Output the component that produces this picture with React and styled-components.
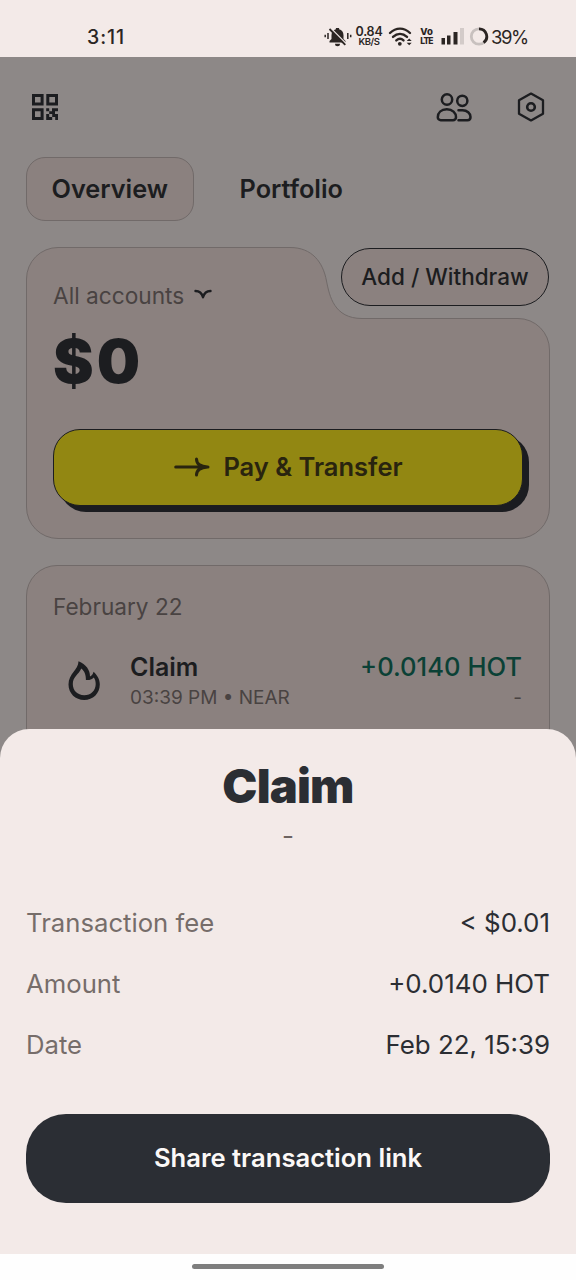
import React from "react";
import styled, { createGlobalStyle } from "styled-components";

const ink = "#1c1d20";

const GlobalStyle = createGlobalStyle`
  * { box-sizing: border-box; }
  body { margin: 0; background: #8d8887; font-family: Inter, "Liberation Sans", sans-serif; }
  button { font-family: inherit; cursor: pointer; }
`;

const Phone = styled.div`
  position: relative;
  width: 576px;
  height: 1280px;
  overflow: hidden;
  display: flex;
  flex-direction: column;
  background: #8d8887;
  color: ${ink};
`;

const StatusBar = styled.header`
  height: 57px;
  flex: none;
  display: flex;
  justify-content: space-between;
  align-items: center;
  padding: 16px 48px 0 87px;
  background: #f3eae8;
  color: #2b2523;
`;

const Clock = styled.span`
  font-size: 19.5px;
  font-weight: 500;
  line-height: 24px;
  letter-spacing: 0.9px;
`;

const StatusIcons = styled.div`
  display: flex;
  align-items: center;
  height: 24px;
`;

const Stack = styled.span`
  display: flex;
  flex-direction: column;
  align-items: center;
  width: ${(p) => p.$width}px;
  margin: ${(p) => p.$margin};
  font-weight: ${(p) => p.$weight};
  white-space: nowrap;
`;

const StackLine = styled.span`
  font-size: ${(p) => p.$size}px;
  line-height: ${(p) => p.$line}px;
  letter-spacing: ${(p) => p.$track || 0}px;
`;

const Percent = styled.span`
  margin-left: 2px;
  font-size: 18.5px;
  line-height: 24px;
  width: 37px;
  letter-spacing: -1.4px;
  white-space: nowrap;
`;

const TopBar = styled.div`
  height: 100px;
  flex: none;
  display: flex;
  justify-content: space-between;
  align-items: center;
  padding: 0 31px 0 31px;
`;

const TopActions = styled.div`
  display: flex;
  align-items: center;
  gap: 45px;
`;

const Tabs = styled.nav`
  flex: none;
  display: flex;
  gap: 20px;
  padding: 0 26px;
`;

const Tab = styled.button`
  height: 64px;
  padding: 0 25px 1px 24.5px;
  border-radius: 19px;
  border: 1px solid ${(p) => (p.$active ? "#716a69" : "transparent")};
  background: ${(p) => (p.$active ? "#8b817f" : "transparent")};
  color: ${ink};
  font-size: 25.3px;
  font-weight: 600;
  line-height: 32px;
`;

const Balance = styled.section`
  position: relative;
  flex: none;
  height: 293px;
  margin: 26px 26px 0;
  padding: 32px 21px 0 27px;
`;

const Outline = styled.svg`
  position: absolute;
  inset: 0;
`;

const BalanceBody = styled.div`
  position: relative;
  display: flex;
  flex-direction: column;
`;

const AccountPicker = styled.div`
  display: flex;
  align-items: center;
  gap: 10px;
  height: 32px;
  font-size: 22.7px;
  color: #494342;
`;

const Amount = styled.div`
  margin-top: 18px;
  height: 64px;
  line-height: 64px;
  font-size: 61px;
  font-weight: 900;
  letter-spacing: 3px;
`;

const AddButton = styled.button`
  position: absolute;
  top: 1px;
  right: 1px;
  width: 208px;
  height: 58px;
  padding: 0 0 2px;
  border: 1.5px solid ${ink};
  border-radius: 29px;
  background: #8b817f;
  color: ${ink};
  font-size: 22.5px;
  font-weight: 500;
`;

const PayButton = styled.button`
  display: flex;
  align-items: center;
  justify-content: center;
  gap: 13px;
  width: 470px;
  height: 77px;
  margin-top: 36px;
  padding: 0 0 2px 1px;
  border: 1.5px solid ${ink};
  border-radius: 27px;
  background: #928712;
  box-shadow: 6px 6px 0 #1b1c20;
  color: #29240f;
  font-size: 25.5px;
  font-weight: 600;
`;

const Activity = styled.section`
  flex: none;
  height: 260px;
  margin: 25px 26px 0;
  padding: 25px 27px 0 26px;
  border: 1px solid #716a69;
  border-radius: 31px;
  background: #8b817f;
`;

const DayLabel = styled.div`
  height: 32px;
  line-height: 32px;
  font-size: 22.6px;
  color: #494342;
`;

const Entry = styled.div`
  display: flex;
  align-items: center;
  margin-top: 26px;
`;

const EntryIcon = styled.div`
  width: 77px;
  height: 64px;
  padding: 10px 0 0 13px;
`;

const EntryColumn = styled.div`
  display: flex;
  flex-direction: column;
  padding-top: 2px;
  align-items: ${(p) => (p.$end ? "flex-end" : "flex-start")};
  flex: ${(p) => (p.$end ? "none" : 1)};
`;

const EntryTitle = styled.span`
  font-size: ${(p) => (p.$gain ? 25.6 : 25)}px;
  line-height: 32px;
  font-weight: ${(p) => (p.$gain ? 500 : 600)};
  color: ${(p) => (p.$gain ? "#0b4136" : ink)};
`;

const EntryNote = styled.span`
  font-size: 19px;
  line-height: 30px;
  color: #494342;
`;

const Sheet = styled.section`
  position: absolute;
  left: 0;
  right: 0;
  bottom: 26px;
  height: 525px;
  display: flex;
  flex-direction: column;
  align-items: stretch;
  padding: 29px 26px 0;
  border-radius: 29px 29px 0 0;
  background: #f3eae8;
  color: #2b2e33;
`;

const SheetTitle = styled.h1`
  margin: 0;
  text-align: center;
  font-size: 47px;
  line-height: 56px;
  font-weight: 900;
  letter-spacing: -0.8px;
`;

const SheetNote = styled.div`
  text-align: center;
  font-size: 26px;
  line-height: 32px;
  margin-top: 6px;
  color: #6d6461;
`;

const Details = styled.dl`
  margin: 40px 0 0;
`;

const Detail = styled.div`
  display: flex;
  justify-content: space-between;
  align-items: center;
  height: 61px;
`;

const Term = styled.dt`
  font-size: 25.7px;
  color: #766d6a;
`;

const Value = styled.dd`
  margin: 0;
  font-size: 25.9px;
  color: #2b2e33;
`;

const ShareButton = styled.button`
  height: 89px;
  margin-top: 39px;
  padding: 0 0 2px;
  border: 0;
  border-radius: 40px;
  background: #2b2e34;
  color: #fbf8f7;
  font-size: 25.6px;
  font-weight: 600;
`;

const NavBar = styled.footer`
  position: absolute;
  left: 0;
  right: 0;
  bottom: 0;
  height: 26px;
  display: flex;
  justify-content: center;
  padding-top: 10px;
  background: #fefefe;
`;

const HomeHandle = styled.div`
  width: 192px;
  height: 5px;
  border-radius: 3px;
  background: #7e7e7e;
`;

const MutedBell = () => (
  <svg width="28" height="22" viewBox="0 0 28 22" fill="none" stroke="#2b2523">
    <path d="M5.500 16.500h16V15l-2-2V9.200c0-3.300-1.700-5.300-4.400-5.900V2h-3.200v1.300C9.200 3.900 7.500 5.900 7.500 9.200V13l-2 2z" fill="#2b2523" stroke="none" />
    <path d="M11 17.800h5a2.500 2.500 0 0 1-5 0z" fill="#2b2523" stroke="none" />
    <path d="M6.800 2.200 22 17.600" stroke="#f3eae8" strokeWidth="1.400" />
    <path d="M5.500 3 21.300 18.800" strokeWidth="1.800" />
    <path d="M4 7v6M1.200 8.800v2.400M23.800 7v6M26.700 8.800v2.400" strokeWidth="1.500" />
  </svg>
);

const Wifi = () => (
  <svg width="25" height="22" viewBox="0 0 25 22" fill="none" stroke="#2b2523" strokeWidth="2.400" strokeLinecap="round">
    <path d="M2 7C8 1.200 16 1.200 22 7M5 10.900c4.300-3.900 9.700-3.900 14 0M8.300 14.400c2.300-2 5.100-2 7.200 0" />
    <circle cx="11.800" cy="17.800" r="1.900" fill="#2b2523" stroke="none" />
    <path d="m18.700 15 2.500-2.500 2.500 2.500zM18.700 16.800l2.500 2.500 2.500-2.500z" fill="#2b2523" stroke="none" />
  </svg>
);

const Signal = () => (
  <svg width="24" height="20" viewBox="0 0 24 20" fill="#2b2523">
    <rect x="0.500" y="11" width="3.500" height="6.500" />
    <rect x="6" y="8.500" width="3.500" height="9" />
    <rect x="12.500" y="5" width="4" height="12.500" />
    <rect x="19" y="1" width="4" height="16.500" fill="#d3cbc9" />
  </svg>
);

const BatteryRing = () => (
  <svg width="20" height="20" viewBox="0 0 20 20" fill="none" strokeWidth="2.800">
    <circle cx="10" cy="9.500" r="7.700" stroke="#c8c1bf" />
    <path d="M10 1.800A7.700 7.700 0 0 1 14.600 15.700" stroke="#2b2523" />
  </svg>
);

const QrCode = () => (
  <svg width="28" height="28" viewBox="0 0 28 28" fill="none" stroke={ink} strokeWidth="3">
    <path d="M2.500 2.500h8.600v8.600H2.500zM16.800 2.500h8.700v8.600h-8.700zM2.500 16.800h8.600v8.700H2.500z" />
    <path d="M15.200 15.300h3v3h-3zM21 15.300h6v2.900h-6zM18.200 18.200H24v2.900h-5.800zM15.200 21.100h3v5.900h-3zM21.200 21.100h3v2.900h-3zM18.200 24h3v3h-3zM24.200 21.100H27V27h-2.800z" fill={ink} stroke="none" />
  </svg>
);

const People = () => (
  <svg width="36" height="30" viewBox="0 0 36 30" fill="none" stroke={ink} strokeWidth="2.500" strokeLinecap="round" strokeLinejoin="round">
    <circle cx="11" cy="7.500" r="5.200" />
    <circle cx="26.300" cy="8.800" r="5.100" />
    <path d="M5 28.200h12a3 3 0 0 0 3-3c0-4.500-3.500-7.900-9.200-7.900s-9 3.400-9 7.900a3 3 0 0 0 3.200 3z" />
    <path d="M22.500 18.300h4c4.600 0 8 2.900 8 6.700 0 2-1 3.200-3 3.200h-9" />
  </svg>
);

const Hexagon = () => (
  <svg width="28" height="30" viewBox="0 0 28 30" fill="none" stroke={ink} strokeWidth="2.300" strokeLinejoin="round">
    <path d="m14 1.600 12 6.700v13.400l-12 6.700-12-6.700V8.300z" />
    <circle cx="14" cy="15" r="3.800" strokeWidth="2.600" />
  </svg>
);

const Chevron = () => (
  <svg width="18" height="12" viewBox="0 0 18 12" fill="none" stroke={ink} strokeWidth="2.400" strokeLinecap="round" strokeLinejoin="round">
    <path d="M1.500 2C5.500 2 7.800 4 9 8.300 10.200 4 12.500 2 16.500 2" />
  </svg>
);

const Arrow = () => (
  <svg width="36" height="20" viewBox="0 0 36 20" fill="none" stroke="#29240f" strokeWidth="3" strokeLinecap="round" strokeLinejoin="round">
    <path d="M1.700 10H34M22.500 2c0 4.700 3.500 7.500 11 8-7.500.5-11 3.300-11 8" />
  </svg>
);

const Flame = () => (
  <svg width="36" height="42" viewBox="0 0 36 42" fill={ink} fillRule="evenodd">
    <path d="M12.500 2.300C12.500 11 2.500 14.500 2.500 25.500 2.500 34.500 9.500 41 18.200 41s15.600-6.500 15.600-15.500c0-5.500-2.500-9.300-6.300-12.800-.5 2.500-1.800 3.800-3.500 4.800C24.200 11 20 5.500 12.500 2.300zM15.300 9.500c3.200 2.700 4.700 6 4.600 11.500h3.400c2-.7 3.500-1.400 4.500-2.500 1.400 2 1.900 4.200 1.900 6.400 0 6.500-4.700 11.300-11.500 11.300S6.800 31.500 6.800 25c0-7.500 6-9.500 8.500-15.500z" />
  </svg>
);

const transaction = [
  ["Transaction fee", "< $0.01"],
  ["Amount", "+0.0140 HOT"],
  ["Date", "Feb 22, 15:39"],
];

export default function App() {
  return (
    <Phone>
      <GlobalStyle />
      <StatusBar>
        <Clock>3:11</Clock>
        <StatusIcons>
          <MutedBell />
          <Stack $width={28} $margin="0 5px 0 3px" $weight={600}>
            <StackLine $size={12.5} $line={10.5} $track={-0.2}>0.84</StackLine>
            <StackLine $size={9.5} $line={9.5} $track={-0.4}>KB/S</StackLine>
          </Stack>
          <Wifi />
          <Stack $width={13} $margin="0 8px 0 7px" $weight={800}>
            <StackLine $size={9.5} $line={8.5}>Vo</StackLine>
            <StackLine $size={8.5} $line={8.5} $track={-0.9}>LTE</StackLine>
          </Stack>
          <Signal />
          <Stack $width={4} />
          <BatteryRing />
          <Percent>39%</Percent>
        </StatusIcons>
      </StatusBar>

      <TopBar>
        <QrCode />
        <TopActions>
          <People />
          <Hexagon />
        </TopActions>
      </TopBar>

      <Tabs>
        <Tab $active>Overview</Tab>
        <Tab>Portfolio</Tab>
      </Tabs>

      <Balance>
        <Outline width="524" height="293" viewBox="0 0 524 293">
          <path
            d="M32 .5H264C286 .5 297 15 300.500 34C303.500 49 308 71.500 336 71.500H492A31.500 31.500 0 0 1 523.500 103V260A31.500 31.500 0 0 1 492 291.500H32A31.500 31.500 0 0 1 .5 260V32A31.500 31.500 0 0 1 32 .5Z"
            fill="#8b817f"
            stroke="#716a69"
          />
        </Outline>
        <BalanceBody>
          <AccountPicker>
            All accounts
            <Chevron />
          </AccountPicker>
          <Amount>$0</Amount>
          <PayButton>
            <Arrow />
            Pay &amp; Transfer
          </PayButton>
        </BalanceBody>
        <AddButton>Add / Withdraw</AddButton>
      </Balance>

      <Activity>
        <DayLabel>February 22</DayLabel>
        <Entry>
          <EntryIcon>
            <Flame />
          </EntryIcon>
          <EntryColumn>
            <EntryTitle>Claim</EntryTitle>
            <EntryNote>03:39 PM • NEAR</EntryNote>
          </EntryColumn>
          <EntryColumn $end>
            <EntryTitle $gain>+0.0140 HOT</EntryTitle>
            <EntryNote>-</EntryNote>
          </EntryColumn>
        </Entry>
      </Activity>

      <Sheet>
        <SheetTitle>Claim</SheetTitle>
        <SheetNote>-</SheetNote>
        <Details>
          {transaction.map(([term, value]) => (
            <Detail key={term}>
              <Term>{term}</Term>
              <Value>{value}</Value>
            </Detail>
          ))}
        </Details>
        <ShareButton>Share transaction link</ShareButton>
      </Sheet>

      <NavBar>
        <HomeHandle />
      </NavBar>
    </Phone>
  );
}
